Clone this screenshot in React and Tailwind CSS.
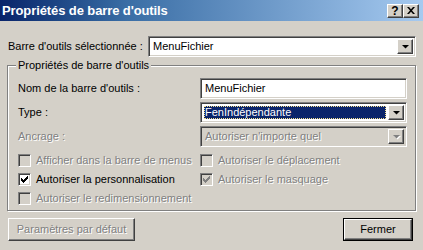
import React from 'react';

const font = "font-['Tahoma','Liberation_Sans',sans-serif] text-[11px]";
const sunken =
  'border border-t-[#808080] border-l-[#808080] border-b-white border-r-white shadow-[inset_1px_1px_0_#404040,inset_-1px_-1px_0_#d4d0c8]';
const raised =
  'border border-t-white border-l-white border-b-[#404040] border-r-[#404040] shadow-[inset_-1px_-1px_0_#808080,inset_1px_1px_0_#d4d0c8]';
const disabledText = 'text-[#808080] [text-shadow:1px_1px_0_#fff]';

const Arrow = ({ disabled }) => (
  <div className={`w-[16px] h-full bg-[#d4d0c8] flex items-center justify-center ${raised}`}>
    <svg width="7" height="4" viewBox="0 0 7 4" className="overflow-visible">
      {disabled && <path d="M1 1h7L4.5 4.5z" fill="#fff" />}
      <path d="M0 0h7L3.5 3.5z" fill={disabled ? '#808080' : '#000'} />
    </svg>
  </div>
);

const Combo = ({ value, focused, disabled, className = '' }) => (
  <div className={`h-[21px] flex ${sunken} ${disabled ? 'bg-[#d4d0c8]' : 'bg-white'} ${className}`}>
    <div className="flex-1 flex items-center p-[3px] pr-[2px] min-w-0">
      <div
        className={`flex-1 h-full flex items-center pl-[1px] leading-none ${
          focused ? 'bg-[#0a246a] text-white outline-1 outline-dotted outline-[#f4e08c] -outline-offset-1' : ''
        } ${disabled ? disabledText : ''}`}
      >
        {value}
      </div>
    </div>
    <div className="py-[2px] pr-[2px]">
      <Arrow disabled={disabled} />
    </div>
  </div>
);

const Check = ({ label, checked, disabled }) => (
  <div className="flex items-center h-[19px]">
    <div className={`w-[13px] h-[13px] flex items-center justify-center ${sunken} ${disabled ? 'bg-[#d4d0c8]' : 'bg-white'}`}>
      {checked && (
        <svg width="7" height="7" viewBox="0 0 7 7">
          <path
            d="M0 2h1v1h1v1h1V3h1V2h1V1h1V0h1v3H6v1H5v1H4v1H3v1H2V6H1V5H0z"
            fill={disabled ? '#808080' : '#000'}
          />
        </svg>
      )}
    </div>
    <span className={`ml-[5px] leading-none ${disabled ? disabledText : 'text-black'}`}>{label}</span>
  </div>
);

const TitleButton = ({ children }) => (
  <div className={`w-[16px] h-[14px] bg-[#d4d0c8] flex items-center justify-center ${raised}`}>{children}</div>
);

export default function App() {
  return (
    <div className={`w-[423px] h-[250px] bg-[#d4d0c8] flex flex-col overflow-hidden ${font} text-black`}>
      {/* Title bar */}
      <div className="h-[21px] flex items-center justify-between bg-gradient-to-r from-[#0a246a] via-[#3a6ea5] via-30% to-[#a6caf0] pl-[2px] pr-[4px]">
        <span className="text-white font-bold text-[13px] leading-none tracking-[-0.1px]">Propriétés de barre d'outils</span>
        <div className="flex gap-0">
          <TitleButton>
            <span className="font-bold text-[12px] leading-none text-black">?</span>
          </TitleButton>
          <TitleButton>
            <svg width="8" height="7" viewBox="0 0 8 7">
              <path d="M0 0h2l2 2.2L6 0h2L5 3.5 8 7H6L4 4.8 2 7H0l3-3.5z" fill="#000" />
            </svg>
          </TitleButton>
        </div>
      </div>

      {/* Selected toolbar */}
      <div className="flex items-center mt-[15px] pl-[8px] pr-[7px]">
        <span className="w-[140px]">Barre d'outils sélectionnée :</span>
        <Combo value="MenuFichier" className="flex-1" />
      </div>

      {/* Group box */}
      <div className="relative mt-[8px] mx-[7px] h-[146px] border border-[#808080] shadow-[inset_1px_1px_0_#fff,1px_1px_0_#fff] pt-[12px] pl-[10px] pr-[8px]">
        <span className="absolute -top-[6px] left-[8px] px-[2px] bg-[#d4d0c8] leading-none">
          Propriétés de barre d'outils
        </span>
        <div className="flex flex-col gap-[3px]">
          <div className="flex items-center">
            <span className="w-[182px]">Nom de la barre d'outils :</span>
            <div className={`flex-1 h-[21px] bg-white flex items-center pl-[4px] ${sunken}`}>MenuFichier</div>
          </div>
          <div className="flex items-center">
            <span className="w-[182px]">Type :</span>
            <Combo value="FenIndépendante" focused className="flex-1" />
          </div>
          <div className="flex items-center">
            <span className={`w-[182px] ${disabledText}`}>Ancrage :</span>
            <Combo value="Autoriser n'importe quel" disabled className="flex-1" />
          </div>
        </div>
        <div className="grid grid-cols-[182px_1fr] mt-[4px]">
          <Check label="Afficher dans la barre de menus" disabled />
          <Check label="Autoriser le déplacement" disabled />
          <Check label="Autoriser la personnalisation" checked />
          <Check label="Autoriser le masquage" checked disabled />
          <Check label="Autoriser le redimensionnement" disabled />
        </div>
      </div>

      {/* Buttons */}
      <div className="flex justify-between mt-[7px] pl-[8px] pr-[10px]">
        <div className={`w-[127px] h-[23px] flex items-center justify-center ${raised} ${disabledText}`}>
          Paramètres par défaut
        </div>
        <div className="border border-black">
          <div className={`w-[68px] h-[21px] flex items-center justify-center ${raised}`}>Fermer</div>
        </div>
      </div>
    </div>
  );
}
